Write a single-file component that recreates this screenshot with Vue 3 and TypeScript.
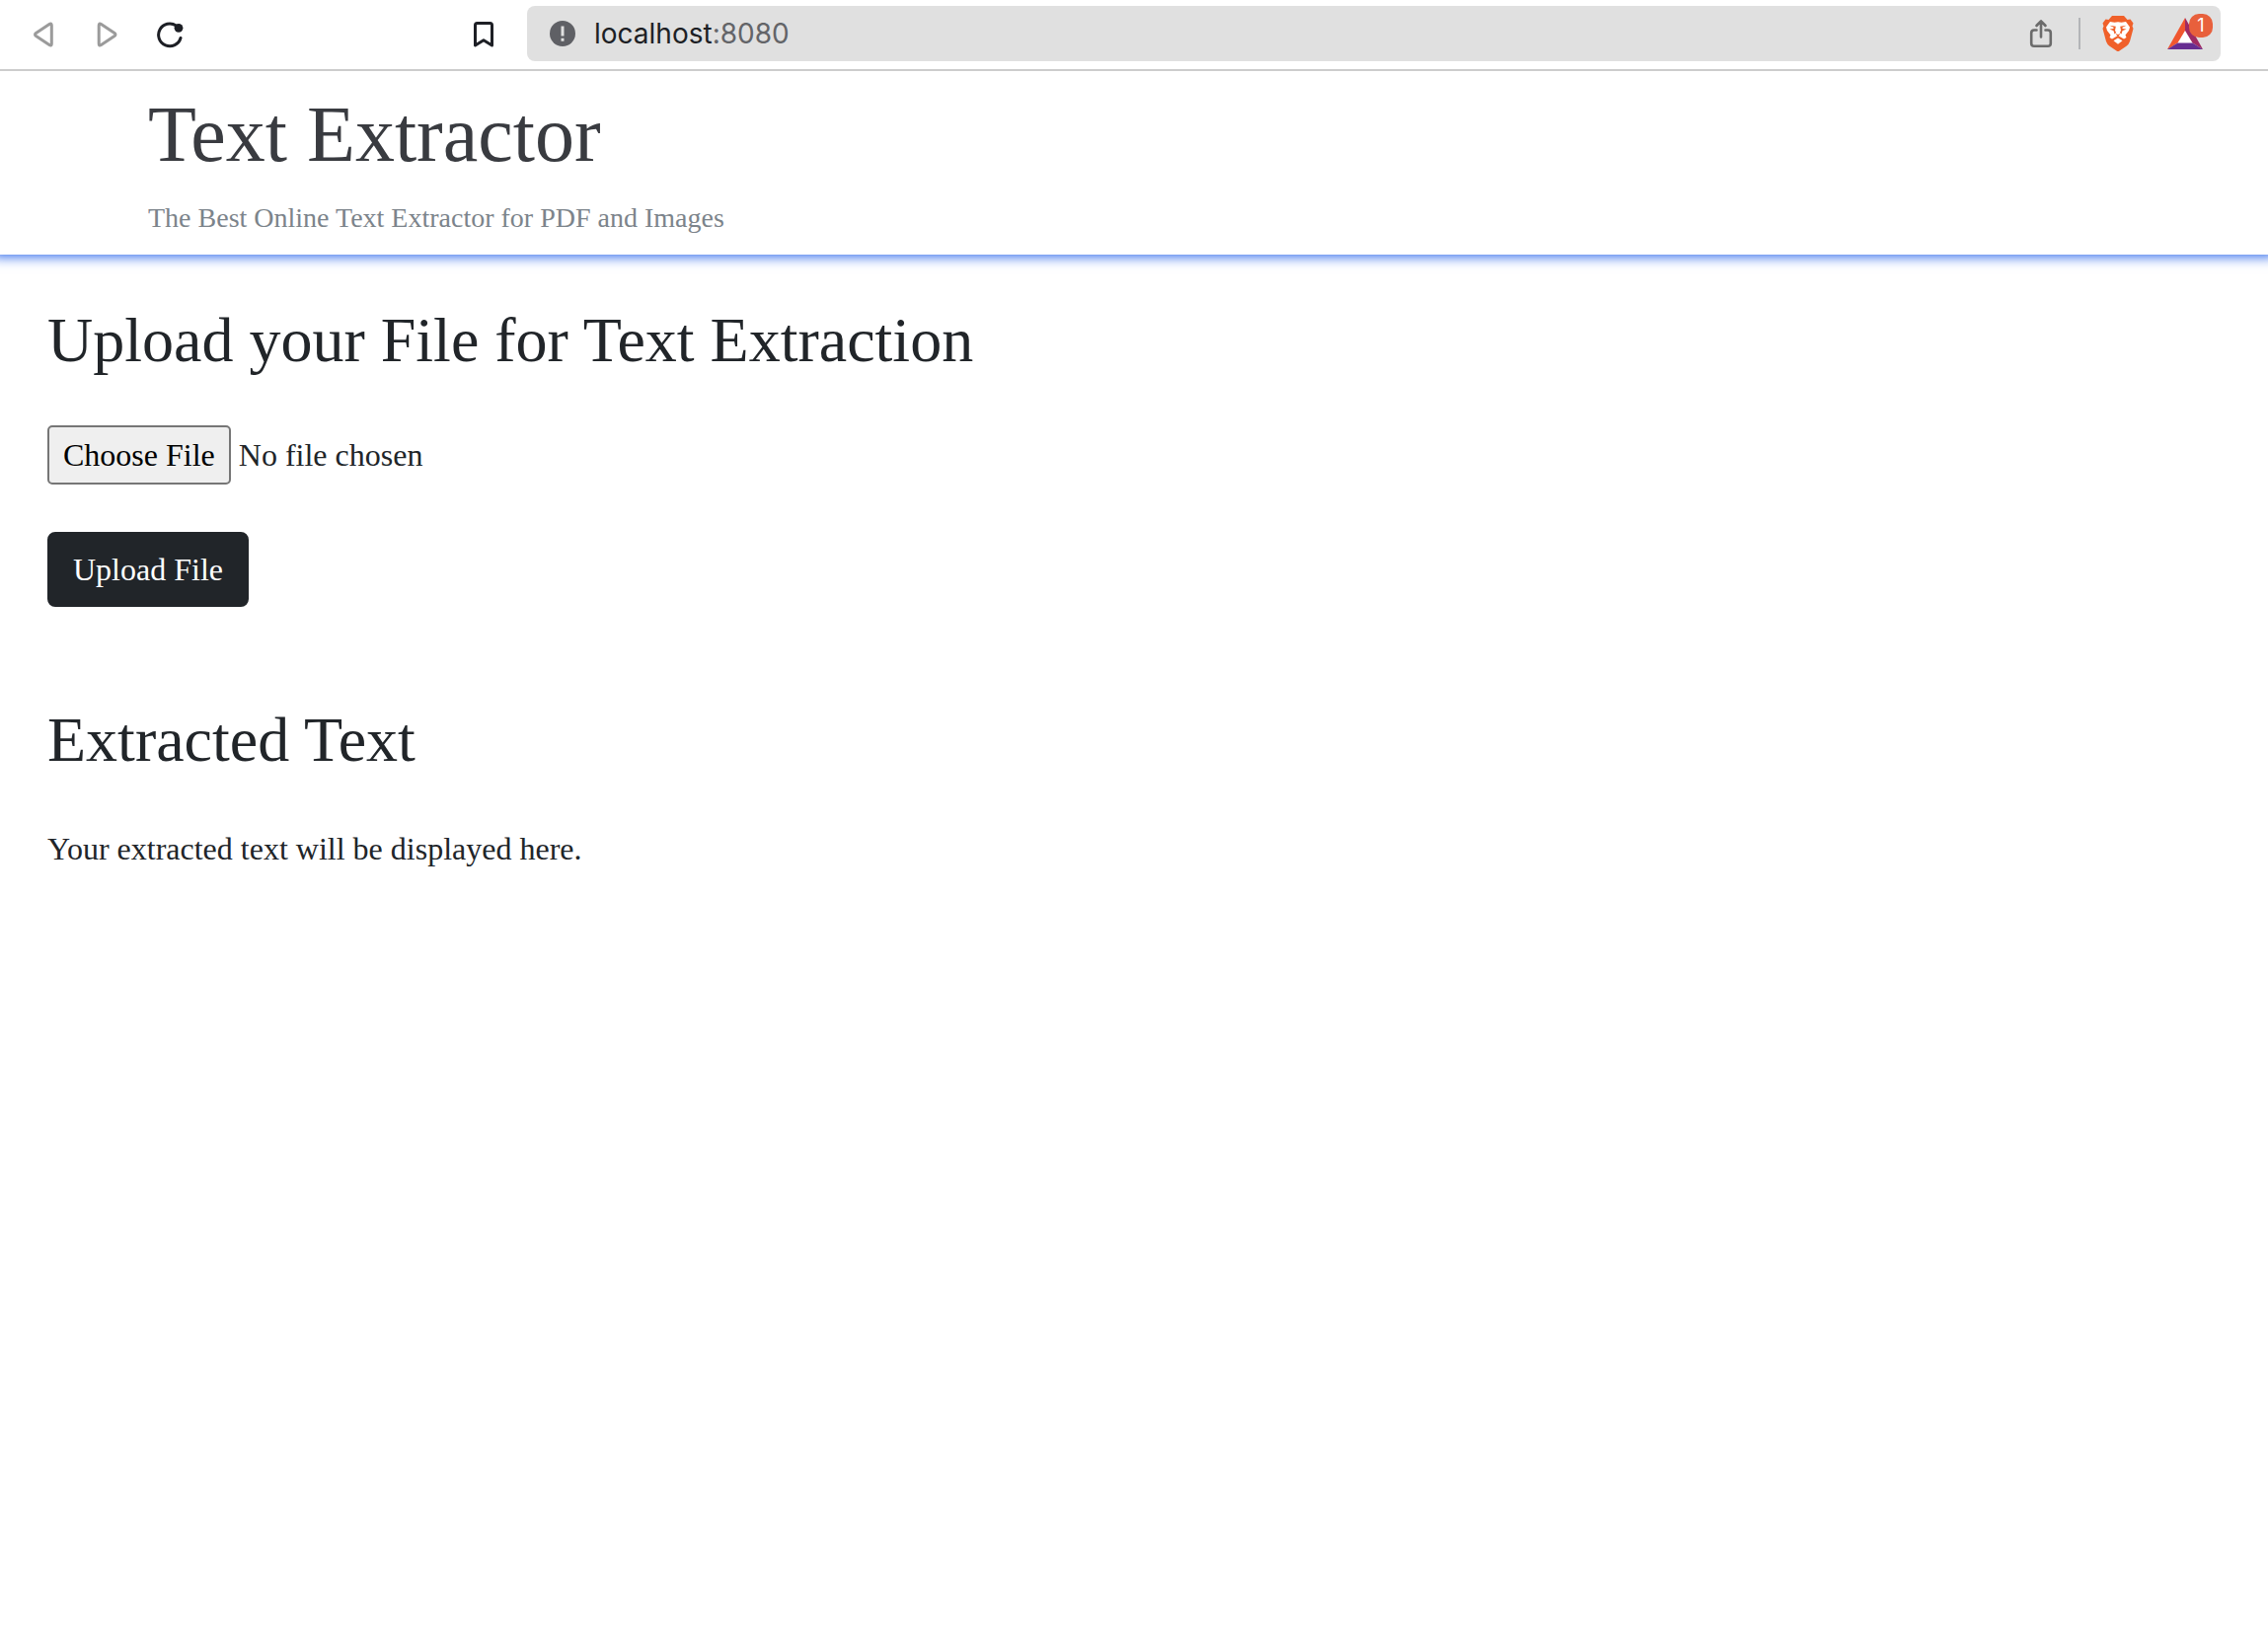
<script setup lang="ts">
import { ref } from 'vue'

const host = 'localhost'
const port = ':8080'
const rewards = ref(1)
const extracted = ref('Your extracted text will be displayed here.')
</script>

<template>
  <div class="window">
    <nav class="toolbar" aria-label="Browser">
      <div class="nav-buttons">
        <button type="button" class="icon-button" aria-label="Back">
          <svg width="28" height="32" viewBox="0 0 28 32" fill="none" stroke="#9b9b9b" stroke-width="3" stroke-linejoin="round">
            <path d="M20 5.500Q22.300 4 22.300 6.800V25.200Q22.300 28 20 26.500L6.500 17.500Q4.500 16 6.500 14.500Z" />
          </svg>
        </button>
        <button type="button" class="icon-button" aria-label="Forward">
          <svg width="28" height="32" viewBox="0 0 28 32" fill="none" stroke="#9b9b9b" stroke-width="3" stroke-linejoin="round">
            <path d="M8.500 5.500Q6.200 4 6.200 6.800V25.200Q6.200 28 8.500 26.500L22 17.500Q24 16 22 14.500Z" />
          </svg>
        </button>
        <button type="button" class="icon-button" aria-label="Reload">
          <svg width="28" height="32" viewBox="0 0 28 32" fill="none">
            <path d="M20.500 7A11.400 11.400 0 1 0 25 19.500" stroke="#1d1f25" stroke-width="3" stroke-linecap="round" />
            <circle cx="23" cy="9.300" r="4.400" fill="#1d1f25" />
          </svg>
        </button>
      </div>
      <button type="button" class="icon-button bookmark" aria-label="Bookmark">
        <svg width="28" height="32" viewBox="0 0 28 32" fill="none" stroke="#1d1f25" stroke-width="3" stroke-linejoin="round">
          <path d="M5.500 6.500Q5.500 4.500 7.500 4.500H20.500Q22.500 4.500 22.500 6.500V27L14 21.800L5.500 27Z" />
        </svg>
      </button>
      <div class="address">
        <svg width="26" height="26" viewBox="0 0 26 26" role="img" aria-label="Not secure">
          <circle cx="13" cy="13" r="13" fill="#5f6065" />
          <path d="M11.500 5.500h3v10h-3zM11.500 17.700h3v3h-3z" fill="#e0e0e0" />
        </svg>
        <span class="url">{{ host }}<span class="port">{{ port }}</span></span>
        <button type="button" class="icon-button share" aria-label="Share">
          <svg width="28" height="32" viewBox="0 0 28 32" fill="none" stroke="#6b6b6b" stroke-width="2.600" stroke-linecap="round" stroke-linejoin="round">
            <path d="M9.500 12.500H7Q4.200 12.500 4.200 15.300V26Q4.200 28.800 7 28.800H21Q23.800 28.800 23.800 26V15.300Q23.800 12.500 21 12.500H18.500M14 19.500V3.500M9.500 8L14 3.300L18.500 8" />
          </svg>
        </button>
        <span class="divider"></span>
        <button type="button" class="icon-button shield" aria-label="Brave Shields">
          <svg width="32" height="36" viewBox="0 0 32 36">
            <path fill="#f0602a" d="M10 0H22L25.500 4L28.500 3.500L31.500 7.500L30.500 10.500L31.500 13L28 26Q27 29 24.500 30.800L17.500 35.500Q16 36.500 14.500 35.500L7.500 30.800Q5 29 4 26L.5 13L1.500 10.500L.5 7.500L3.500 3.500L6.500 4Z" />
            <path fill="#fff" d="M8 6L12.500 6.800L16 6.200L19.500 6.800L24 6L28 11.500L27 15L23.500 19.500L24.500 22L22 23.500L16 20L10 23.500L7.500 22L8.500 19.500L5 15L4 11.500Z" />
            <path fill="#fff" d="M16 22.500L20.500 25.200L16 28.800L11.500 25.200Z" />
            <path fill="#f0602a" d="M7.500 9.800L13.800 10.800L13 15L14.200 17L12.500 18.500L11.500 15.200L7.500 13.500L11.500 13V11.800ZM24.500 9.800L18.200 10.800L19 15L17.800 17L19.500 18.500L20.500 15.200L24.500 13.500L20.500 13V11.800ZM13.500 18L16 19L18.500 18L16.700 20.500H15.300Z" />
          </svg>
        </button>
        <button type="button" class="icon-button rewards" aria-label="Brave Rewards">
          <svg width="36" height="32" viewBox="0 0 36 32">
            <path fill="#fff" d="M18 10L28 27H8Z" />
            <path fill="#f0562f" d="M18 0V13L10.500 25.500L0 32Z" />
            <path fill="#9e2a63" d="M18 0L36 32L25.500 25.500L18 13Z" />
            <path fill="#662d91" d="M0 32L10.500 25.500H25.500L36 32Z" />
          </svg>
          <span class="badge">{{ rewards }}</span>
        </button>
      </div>
    </nav>

    <header class="site-header">
      <h1 class="brand">Text Extractor</h1>
      <p class="tagline">The Best Online Text Extractor for PDF and Images</p>
    </header>

    <main class="content">
      <form class="upload" @submit.prevent>
        <h2 class="heading"><label for="file">Upload your File for Text Extraction</label></h2>
        <input id="file" class="file" type="file" name="file" />
        <button type="submit" class="submit">Upload File</button>
      </form>
      <section class="result">
        <h2 class="heading">Extracted Text</h2>
        <p class="text">{{ extracted }}</p>
      </section>
    </main>
  </div>
</template>

<style>
body {
  margin: 0;
  background: #fff;
}
</style>

<style scoped>
.window {
  font-family: "Liberation Serif", "Times New Roman", serif;
  color: #212529;
}

.toolbar {
  display: flex;
  align-items: center;
  height: 70px;
  padding-left: 30px;
  padding-right: 48px;
  border-bottom: 2px solid #ccc;
}

.nav-buttons {
  display: flex;
  gap: 36px;
}

.icon-button {
  display: flex;
  flex: none;
  padding: 0;
  border: 0;
  background: none;
}

.bookmark {
  margin-left: 290px;
  margin-right: 30px;
}

.address {
  display: flex;
  flex: 1;
  align-items: center;
  height: 56px;
  box-sizing: border-box;
  margin-bottom: 2px;
  padding-left: 23px;
  padding-right: 18px;
  border-radius: 8px;
  background: #e0e0e0;
}

.url {
  flex: 1;
  margin-left: 19px;
  font-family: Inter, "Liberation Sans", sans-serif;
  font-size: 28px;
  line-height: 36px;
  color: #1d1f25;
}

.port {
  color: #636468;
}

.divider {
  width: 2px;
  height: 32px;
  margin-left: 24px;
  background: #b3b5b8;
}

.shield {
  margin-left: 22px;
}

.rewards {
  position: relative;
  margin-left: 34px;
}

.badge {
  position: absolute;
  top: -4px;
  right: -10px;
  width: 24px;
  height: 24px;
  border-radius: 10px;
  background: #e8603c;
  color: #fff;
  font-family: Inter, "Liberation Sans", sans-serif;
  font-size: 18px;
  line-height: 24px;
  text-align: center;
}

.site-header {
  padding: 16px 150px;
  box-shadow: 0 -6px 12px 8px #2b67eb;
  clip-path: inset(0 0 -20px 0);
}

.brand {
  margin: 0 0 16px;
  font-size: 80px;
  font-weight: 400;
  line-height: 96px;
  color: #393b40;
}

.tagline {
  margin: 0;
  font-size: 28px;
  line-height: 42px;
  color: #7c848b;
}

.content {
  display: flex;
  flex-direction: column;
  gap: 96px;
  padding: 48px;
}

.upload,
.result {
  display: flex;
  flex-direction: column;
  align-items: flex-start;
  gap: 48px;
}

.heading {
  margin: 0;
  font-size: 64px;
  font-weight: 400;
  line-height: 77px;
}

.file {
  height: 60px;
  font-family: inherit;
  font-size: 32px;
  line-height: 48px;
  color: #212529;
}

.file::file-selector-button {
  box-sizing: border-box;
  height: 60px;
  margin: 0 8px 0 0;
  padding: 0 14px;
  border: 2px solid #767676;
  border-radius: 5px;
  background: #efefef;
  color: #000;
  font: inherit;
}

.submit {
  padding: 12px 24px;
  border: 2px solid #212529;
  border-radius: 8px;
  background: #212529;
  color: #fff;
  font-family: inherit;
  font-size: 32px;
  line-height: 48px;
}

.text {
  margin: 0;
  font-size: 32px;
  line-height: 48px;
}
</style>
